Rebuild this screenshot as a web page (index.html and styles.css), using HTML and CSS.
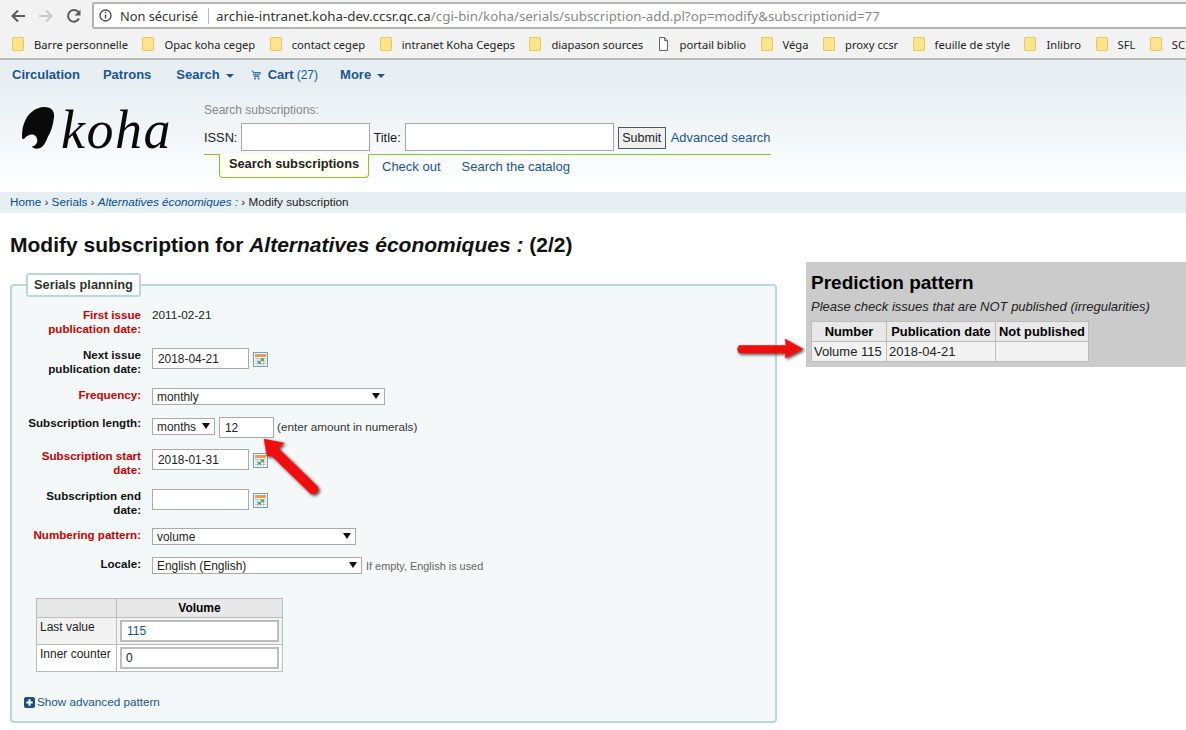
FILE: index.html
```html
<!DOCTYPE html>
<html lang="fr">
<head>
<meta charset="utf-8">
<title>Modify subscription</title>
<link rel="stylesheet" href="styles.css">
</head>
<body>
<div class="toolbar">
  <svg class="tb-icon" width="16" height="16" viewBox="0 0 16 16"><path d="M15 8H3M8 2.500 2.500 8 8 13.500" fill="none" stroke="#5a5a5a" stroke-width="2"/></svg>
  <svg class="tb-icon" width="16" height="16" viewBox="0 0 16 16"><path d="M1 8h12M8 2.500 13.500 8 8 13.500" fill="none" stroke="#c9c9c9" stroke-width="2"/></svg>
  <svg class="tb-icon" width="16" height="16" viewBox="0 0 16 16"><path d="M13 10.500A5.800 5.800 0 1 1 12.600 4.500" fill="none" stroke="#5a5a5a" stroke-width="2"/><path d="M14.500 1.500v6h-6z" fill="#5a5a5a"/></svg>
  <div class="omnibox">
    <svg width="13" height="13" viewBox="0 0 13 13"><circle cx="6.500" cy="6.500" r="5.500" fill="none" stroke="#444" stroke-width="1.300"/><path d="M6.500 5.500v4M6.500 3v1.300" stroke="#444" stroke-width="1.400"/></svg>
    <span class="secure">Non sécurisé</span>
    <span class="url"><span class="host">archie-intranet.koha-dev.ccsr.qc.ca</span>/cgi-bin/koha/serials/subscription-add.pl?op=modify&amp;subscriptionid=77</span>
  </div>
</div>
<div class="bookmarks">
  <span class="bm"><i class="folder"></i>Barre personnelle</span>
  <span class="bm"><i class="folder"></i>Opac koha cegep</span>
  <span class="bm"><i class="folder"></i>contact cegep</span>
  <span class="bm"><i class="folder"></i>intranet Koha Cegeps</span>
  <span class="bm"><i class="folder"></i>diapason sources</span>
  <span class="bm"><svg class="doc" width="9" height="14" viewBox="0 0 9 14"><path d="M.5.500h5l3 3v10H.5zM5.500.500v3h3" fill="#fff" stroke="#666"/></svg>portail biblio</span>
  <span class="bm"><i class="folder"></i>Véga</span>
  <span class="bm"><i class="folder"></i>proxy ccsr</span>
  <span class="bm"><i class="folder"></i>feuille de style</span>
  <span class="bm"><i class="folder"></i>Inlibro</span>
  <span class="bm"><i class="folder"></i>SFL</span>
  <span class="bm"><i class="folder"></i>SC</span>
</div>

<header class="head">
  <nav class="nav">
    <a>Circulation</a>
    <a>Patrons</a>
    <a class="drop first-drop">Search</a>
    <a class="cart"><svg width="10" height="10" viewBox="0 0 10 10"><path d="M.5 1h1.500l1.200 5.500h5M2.500 2.500h7L8.500 5H3M4.500 2.500 5 5M7 2.500 6.800 5" fill="none" stroke="#2a5f9e" stroke-width=".9"/><circle cx="4" cy="8.500" r="1" fill="#2a5f9e"/><circle cx="7.500" cy="8.500" r="1" fill="#2a5f9e"/></svg>Cart <span class="count">(27)</span></a>
    <a class="drop">More</a>
  </nav>
  <div class="brand-row">
    <div class="logo">
      <svg width="33" height="42" viewBox="0 0 33 42"><path d="M22.700 0C29 0 33 4 32 10.500 31 18 29 25 26 29.500 24 35 21 41 16.500 41.500 13 42 10.500 41 10 39.300 12 39.500 14.500 38 15.300 34.300 15.500 31 14 28.700 11 27.500 8 27 4.500 28.500 2 32 .5 32.500 0 31 0 30 0 24 .5 19.300 3 14 6 7 13 0 22.700 0Z" fill="#0a0a0a"/></svg>
      <span class="logo-text">koha</span>
    </div>
    <div class="search">
      <div class="search-title">Search subscriptions:</div>
      <form class="search-form">
        <label>ISSN:</label><input class="issn" type="text">
        <label>Title:</label><input class="title" type="text">
        <button type="button">Submit</button>
        <a>Advanced search</a>
      </form>
      <div class="tabs">
        <span class="tab-on">Search subscriptions</span>
        <a>Check out</a>
        <a>Search the catalog</a>
      </div>
    </div>
  </div>
</header>
<div class="crumbs"><a>Home</a> <b>›</b> <a>Serials</a> <b>›</b> <a><em>Alternatives économiques :</em></a> <b>›</b> Modify subscription</div>

<main class="main">
  <div class="left">
    <h1>Modify subscription for <em>Alternatives économiques :</em> (2/2)</h1>
    <fieldset class="plan">
      <legend>Serials planning</legend>
      <div class="row tall"><span class="lab req">First issue publication date:</span><span class="static">2011-02-21</span></div>
      <div class="row tall next"><span class="lab">Next issue publication date:</span><input class="date" value="2018-04-21"><svg class="cal" width="15" height="15" viewBox="0 0 15 15"><use href="#cal"/></svg></div>
      <div class="row freq"><span class="lab req">Frequency:</span><span class="sel w233"><select><option>monthly</option></select></span></div>
      <div class="row len"><span class="lab">Subscription length:</span><span class="sel w63"><select><option>months</option></select></span><input class="num" value="12"><span class="hint">(enter amount in numerals)</span></div>
      <div class="row tall"><span class="lab req">Subscription start date:</span><input class="date" value="2018-01-31"><svg class="cal" width="15" height="15" viewBox="0 0 15 15"><use href="#cal"/></svg></div>
      <div class="row tall end"><span class="lab">Subscription end date:</span><input class="date"><svg class="cal" width="15" height="15" viewBox="0 0 15 15"><use href="#cal"/></svg></div>
      <div class="row"><span class="lab req">Numbering pattern:</span><span class="sel w204"><select><option>volume</option></select></span></div>
      <div class="row"><span class="lab">Locale:</span><span class="sel w210"><select><option>English (English)</option></select></span><span class="small">If empty, English is used</span></div>
      <table class="pattern">
        <tr class="th"><th></th><th>Volume</th></tr>
        <tr class="alt"><td>Last value</td><td><input class="blue" value="115"></td></tr>
        <tr><td>Inner counter</td><td><input value="0"></td></tr>
      </table>
      <a class="adv"><svg width="11" height="11" viewBox="0 0 11 11"><rect width="11" height="11" rx="2" fill="#1d4f86"/><path d="M5.500 2.300v6.400M2.300 5.500h6.400" stroke="#fff" stroke-width="2"/></svg>Show advanced pattern</a>
    </fieldset>
  </div>
  <aside class="predict">
    <h2>Prediction pattern</h2>
    <p><em>Please check issues that are NOT published (irregularities)</em></p>
    <table>
      <tr class="th"><th>Number</th><th>Publication date</th><th>Not published</th></tr>
      <tr class="alt"><td>Volume 115</td><td>2018-04-21</td><td></td></tr>
    </table>
  </aside>
</main>

<svg class="defs" width="0" height="0"><defs>
  <symbol id="cal" viewBox="0 0 15 15"><rect x=".5" y=".5" width="14" height="14" fill="#f3f7fb" stroke="#6f9fd0"/><rect x="2" y="2" width="11" height="3" fill="#f09a4a"/><path d="M2 6.500h11M2 9h11M2 11.500h11M4.500 6v7.500M7.500 6v7.500M10.500 6v7.500" stroke="#b4bcc6" stroke-width=".8"/><rect x="8" y="6.500" width="3" height="2.500" fill="#5fa75f"/><rect x="5" y="9" width="3" height="2.500" fill="#5fa75f"/></symbol>
  <filter id="sh" x="-30%" y="-30%" width="160%" height="160%"><feDropShadow dx="1.500" dy="1.500" stdDeviation="1.500" flood-color="#000" flood-opacity=".75"/></filter>
</defs></svg>
<svg class="arrows" width="1186" height="730" viewBox="0 0 1186 730">
  <g filter="url(#sh)" fill="#f00d0d">
    <path d="M264 439 284 443 278 448 317 486Q320 490 316 493 313 495 310 493L272 456 267 456Z" stroke="#f00d0d" stroke-linejoin="round" stroke-width=".5"/>
    <path d="M803 349 785 339 786 345.500 739 345.500Q736 349 739 353L786 353 785 358Z" stroke="#f00d0d" stroke-linejoin="round" stroke-width=".5"/>
  </g>
</svg>
</body>
</html>
```
FILE: styles.css
```css
* { box-sizing: border-box; }
html, body { margin: 0; height: 730px; overflow: hidden; background: #fff; }
body { font-family: "Liberation Sans", Arial, sans-serif; font-size: 12px; color: #000; position: relative; }
a { color: #004d99; text-decoration: none; }

.toolbar { height: 30px; background: #f2f2f2; display: flex; align-items: center; padding: 1px 0 0 10px; gap: 12px; }
.tb-icon { flex: none; }
.omnibox { flex: 1; height: 27px; margin-left: -2px; background: #fff; border: 2px solid #b4b4b4; border-right: 0; border-radius: 3px 0 0 3px; display: flex; align-items: center; padding-left: 5px; font-family: "Noto Sans", sans-serif; font-size: 13.350px; color: #888; }
.secure { color: #333; margin-left: 8px; padding-right: 10px; border-right: 1px solid #bbb; margin-right: 7px; line-height: 16px; font-size: 12.800px; white-space: nowrap; }
.url { white-space: nowrap; }
.host { color: #333; }
.bookmarks { height: 30px; background: #f2f2f2; border-bottom: 2px solid #b8b8b8; display: flex; align-items: center; padding-left: 12px; gap: 14.500px; font-family: "Noto Sans", sans-serif; font-size: 11.200px; color: #222; white-space: nowrap; overflow: hidden; }
.bm { display: flex; align-items: center; gap: 10px; flex: none; }
.folder { width: 12px; height: 14px; background: #fde48c; border: 1px solid #edc95c; border-radius: 1px; flex: none; }
.doc { margin: 0 2px 0 1px; }

.head { height: 132px; background: linear-gradient(#e6eef2, #e8eff3 20%, #fff 100%); }
.nav { display: flex; align-items: center; height: 29px; padding-left: 12px; gap: 23px; font-weight: bold; font-size: 13px; }
.nav a { color: #1a5499; }
.drop { display: flex; align-items: center; gap: 6px; }
.first-drop { margin-left: 2px; }
.drop::after { content: ""; border: 4.500px solid transparent; border-top: 4px solid #1a5499; border-bottom: 0; margin-top: 2px; }
.cart { display: flex; align-items: center; gap: 7px; margin-left: -6px; margin-right: -1px; }
.cart .count { font-weight: normal; margin-left: -4px; font-size: 12px; }
.brand-row { display: flex; padding-left: 22px; }
.logo { width: 182px; display: flex; align-items: flex-start; padding-top: 18px; }
.logo svg { flex: none; }
.logo-text { font-family: "Liberation Serif", serif; font-style: italic; font-size: 54px; line-height: 42px; letter-spacing: 1.500px; margin: 2px 0 0 6px; color: #0a0a0a; }
.search { width: 567px; }
.search-title { color: #888; margin-top: 14px; line-height: 14px; }
.search-form { display: flex; align-items: center; height: 30px; margin-top: 5px; font-size: 12.800px; }
.search-form label { color: #222; margin-right: 4px; }
.search-form input { height: 28px; border: 1px solid #a8a8a8; background: #fff; }
.issn { width: 129px; margin-right: 3px; }
.title { width: 209px; margin-right: 4px; }
.search-form button { width: 48px; height: 22px; padding: 0; margin-top: 2px; margin-right: 5px; font: 12.500px "Liberation Sans", sans-serif; color: #222; background: #f0f0f0; border: 1px solid #555; }
.search-form a { color: #1a5499; white-space: nowrap; font-size: 12.900px; }
.tabs { display: flex; align-items: flex-start; margin-top: 2px; border-top: 1px solid #8cc22c; height: 26px; padding-left: 15px; font-size: 13px; border-radius: 0 0 3px 3px; }
.tab-on { width: 150px; height: 24px; margin-top: -1px; background: #fffff3; border: 1px solid #8cc22c; border-top-color: #fffff3; border-radius: 0 0 4px 4px; font-weight: bold; font-size: 12.800px; text-align: center; line-height: 18px; color: #222; }
.tabs a { margin-left: 13px; margin-right: 8px; line-height: 24px; color: #1a5499; }
.crumbs { height: 21px; line-height: 19px; padding-left: 10px; background: #e6eef2; font-size: 11.700px; color: #222; }
.crumbs b { font-weight: normal; }

.main { display: grid; grid-template-columns: 806px 380px; }
.left { padding-left: 10px; min-width: 0; }
h1 { margin: 21px 0 0; font-size: 21px; line-height: 22px; color: #111; white-space: nowrap; }
.plan { width: 767px; height: 450px; margin: 17px 0 0; padding: 0 0 0 10px; border: 2px solid #b9d8d9; border-radius: 4px; background: #f4f8f9; display: block; }
.plan legend { margin-left: 4px; padding: 0 6px; height: 24px; line-height: 19px; font-weight: bold; font-size: 12.800px; color: #333; background: #fff; border: 2px solid #b9d8d9; border-radius: 3px; }
.row { display: flex; align-items: flex-start; margin-bottom: 12px; min-height: 17px; }
.row:first-of-type { margin-top: 11px; }
.tall { min-height: 28px; }
.lab { width: 119px; text-align: right; font-weight: bold; font-size: 11.600px; line-height: 14px; margin-right: 11px; flex: none; color: #111; }
.req { color: #c00; }
.static { line-height: 14px; color: #222; font-size: 11.800px; }
.row input { font: 11.900px "Liberation Sans", sans-serif; color: #222; border: 1px solid #aaa; background: #fff; padding: 0 5px; }
.row input.date { width: 97px; height: 21px; }
.freq { min-height: 16px; }
.len { margin-bottom: 11px; }
.len .lab { margin-top: -1px; }
.len .sel { margin-top: 1px; }
.end { min-height: 27px; margin-bottom: 11px; }
.cal { margin: 4px 0 0 4px; flex: none; }
.num { width: 55px; height: 21px; margin-left: 4px; }
.hint { margin: 3px 0 0 3px; color: #333; font-size: 11.700px; }
.small { margin: 3px 0 0 4px; font-size: 10.900px; color: #666; }
.sel { position: relative; display: inline-block; height: 17px; flex: none; }
.sel select { appearance: none; width: 100%; height: 100%; border: 1px solid #aaa; border-radius: 0; background: #fff; font: 11.900px "Liberation Sans", sans-serif; color: #222; padding: 0 0 0 4px; }
.sel::after { content: ""; position: absolute; right: 5px; top: 5px; border: 4px solid transparent; border-top: 6px solid #111; border-bottom: 0; pointer-events: none; }
.w233 { width: 233px; }
.w63 { width: 63px; }
.w204 { width: 204px; }
.w210 { width: 210px; }

table { border-collapse: collapse; }
.pattern { width: 247px; margin: 24px 0 0 14px; table-layout: fixed; background: #fff; }
.pattern td, .pattern th, .predict td, .predict th { border: 1px solid #bcbcbc; }
.pattern th { height: 19px; padding: 0; background: #e8e8e8; }
.pattern th:first-child { width: 80px; }
.pattern td { height: 27px; padding: 2px 3px; vertical-align: top; color: #222; }
.pattern .alt td { background: #f2f2f2; }
.pattern td input { display: block; width: 100%; height: 22px; border: 2px solid #bdbdbd; background: #fff; font: 12px "Liberation Sans", sans-serif; padding: 0 4px; color: #222; }
.pattern td input.blue { color: #1a5499; padding-left: 5px; }
.adv { display: flex; align-items: center; gap: 2px; margin: 23px 0 0 2px; font-size: 11.700px; color: #1a5499; line-height: 14px; }

.predict { margin-top: 49px; height: 105px; padding: 9px 0 0 5px; background: #cbcbcb; }
.predict h2 { margin: 0; font-size: 19px; line-height: 23px; color: #000; }
.predict p { margin: 5px 0 0; font-size: 13px; line-height: 15px; color: #222; white-space: nowrap; }
.predict table { margin-top: 7px; width: 278px; table-layout: fixed; background: #f2f2f2; }
.predict th { height: 20px; padding: 0; background: #e8e8e8; font-size: 12.900px; }
.predict td { height: 20px; padding: 0 2px; font-size: 13px; color: #222; }
.predict th:nth-child(1) { width: 75px; }
.predict th:nth-child(2) { width: 109px; }

.defs { position: absolute; }
.arrows { position: absolute; left: 0; top: 0; pointer-events: none; }
```
